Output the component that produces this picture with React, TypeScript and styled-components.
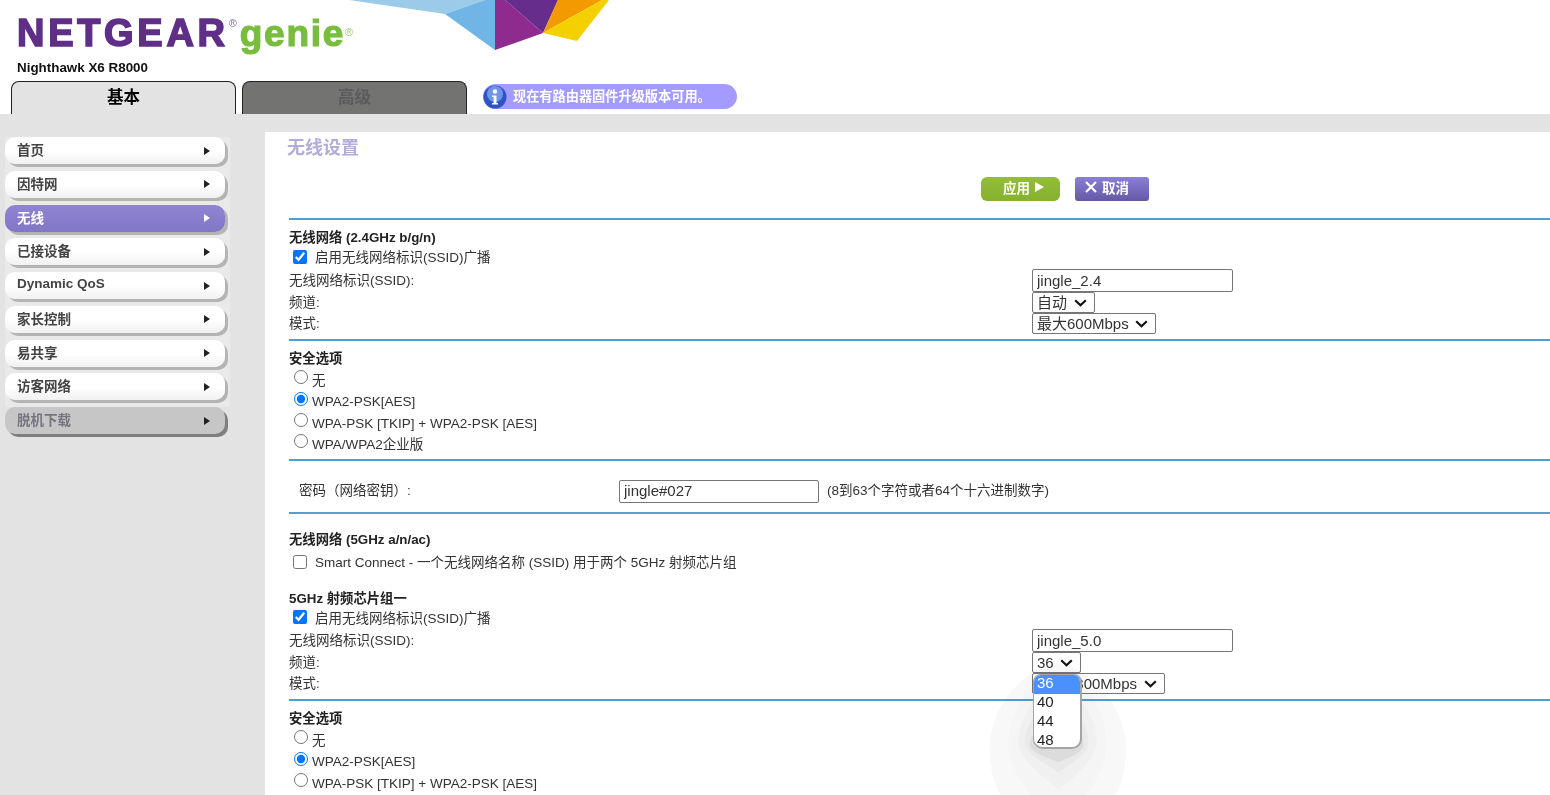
import React from 'react';
import styled, { createGlobalStyle } from 'styled-components';

const GlobalStyle = createGlobalStyle`
  html, body {
    margin: 0;
    padding: 0;
    height: 795px;
    overflow: hidden;
    background: #fff;
    font-family: "Liberation Sans", "Noto Sans CJK SC", Arial, sans-serif;
    font-size: 13.5px;
    line-height: 16px;
    color: #333;
  }
`;

const Page = styled.div`
  width: 1550px;
  height: 795px;
  overflow: hidden;
  display: flex;
  flex-direction: column;
`;

const Header = styled.header`
  height: 114px;
  flex: none;
  display: flex;
  flex-direction: column;
`;

const BrandRow = styled.div`
  height: 81px;
  display: flex;
  align-items: flex-start;
`;

const BrandText = styled.div`
  width: 349px;
  padding: 8px 0 0 17px;
  box-sizing: border-box;
`;

const Logo = styled.div`
  display: flex;
  align-items: baseline;
  height: 51px;
  line-height: 50px;
  font-weight: 700;
  white-space: nowrap;
`;

const LogoMain = styled.span`
  font-size: 38px;
  letter-spacing: 3.7px;
  color: #5f2f87;
  -webkit-text-stroke: 1.6px #5f2f87;
`;

const LogoSub = styled.span`
  font-size: 37px;
  letter-spacing: 1.7px;
  margin-left: 3px;
  color: #78bd3e;
  -webkit-text-stroke: 1.2px #78bd3e;
`;

const Reg = styled.span<{ $c: string; $top: number }>`
  align-self: flex-start;
  margin-top: ${(p) => p.$top}px;
  font-size: 11px;
  font-weight: 400;
  line-height: 10px;
  color: ${(p) => p.$c};
`;

const Model = styled.div`
  margin-top: 1px;
  font-size: 13.4px;
  font-weight: 700;
  color: #111;
`;

const TabRow = styled.div`
  height: 33px;
  display: flex;
  padding-left: 11px;
`;

const Tab = styled.div<{ $off?: boolean }>`
  width: 225px;
  height: 33px;
  margin-right: 6px;
  box-sizing: border-box;
  border: 1px solid #222;
  border-bottom: none;
  border-radius: 8px 8px 0 0;
  background: ${(p) => (p.$off ? '#737472' : '#e3e3e3')};
  color: ${(p) => (p.$off ? '#5b5b5b' : '#000')};
  font-size: 16.5px;
  font-weight: 700;
  text-align: center;
  line-height: 30px;
`;

const Notice = styled.div`
  width: 254px;
  height: 25px;
  margin: 3px 0 0 10px;
  box-sizing: border-box;
  border-radius: 13px;
  background: #a39bff;
  color: #fff;
  font-size: 13.2px;
  font-weight: 700;
  display: flex;
  align-items: center;
  gap: 6px;
  white-space: nowrap;
`;

const GrayBar = styled.div`
  height: 18px;
  flex: none;
  background: #e3e3e3;
`;

const Main = styled.div`
  flex: 1;
  display: flex;
  min-height: 0;
`;

const Sidebar = styled.nav`
  width: 265px;
  flex: none;
  background: #e3e3e3;
  padding: 5px 0 0 5px;
  box-sizing: border-box;
`;

const NavSlot = styled.div`
  width: 225px;
  height: 33.75px;
  background: #e9e9e9;
  &:last-child {
    background: none;
  }
`;

const NavItem = styled.div<{ $active?: boolean; $off?: boolean }>`
  width: 220px;
  height: 27px;
  padding: 0 15px 0 12px;
  box-sizing: border-box;
  display: flex;
  align-items: center;
  justify-content: space-between;
  border-radius: 10px;
  font-size: 13.5px;
  font-weight: 700;
  background: ${(p) =>
    p.$active
      ? 'linear-gradient(#8f84d2, #8276c6)'
      : p.$off
      ? '#c6c6c6'
      : 'linear-gradient(#fff 0%, #fff 50%, #f1f1f1 100%)'};
  color: ${(p) => (p.$active ? '#fff' : p.$off ? '#75757f' : '#444')};
  box-shadow: 3px 3px 0 ${(p) => (p.$off ? '#7f7f7f' : '#b4b4b4')};
`;

const NavLabel = styled.span<{ $latin?: boolean }>`
  margin-top: ${(p) => (p.$latin ? -3 : 1)}px;
`;

const Arrow = styled.span<{ $active?: boolean }>`
  width: 0;
  height: 0;
  border-style: solid;
  border-width: 4px 0 4px 6px;
  border-color: transparent transparent transparent ${(p) => (p.$active ? '#fff' : '#222')};
`;

const Content = styled.main`
  flex: 1;
  position: relative;
  padding-left: 24px;
  overflow: hidden;
`;

const Title = styled.h1`
  margin: 0 0 0 -2px;
  height: 32px;
  line-height: 33px;
  font-size: 18px;
  font-weight: 700;
  color: #b3acd9;
`;

const ButtonBar = styled.div`
  height: 54px;
  padding: 13px 0 0 692px;
  box-sizing: border-box;
  display: flex;
  gap: 15px;
`;

const ActionButton = styled.button<{ $w: number; $kind: 'apply' | 'cancel' }>`
  width: ${(p) => p.$w}px;
  height: 24px;
  padding: 0 ${(p) => (p.$kind === 'apply' ? 0 : 10)}px 4px ${(p) => (p.$kind === 'apply' ? 6 : 0)}px;
  border: none;
  border-radius: ${(p) => (p.$kind === 'apply' ? 6 : 3)}px;
  background: ${(p) =>
    p.$kind === 'apply' ? 'linear-gradient(#93bd3a, #85b22e)' : 'linear-gradient(#8a7fd6, #6458a6)'};
  color: #fff;
  font-family: inherit;
  font-size: 13.5px;
  font-weight: 700;
  display: flex;
  align-items: center;
  justify-content: center;
  gap: 5px;
`;

const Rule = styled.hr<{ $mt?: number }>`
  height: 2px;
  margin: ${(p) => p.$mt ?? 0}px 0 0;
  border: none;
  background: #4f9fd2;
`;

const Heading = styled.div<{ $mt?: number }>`
  height: 20px;
  line-height: 22px;
  margin-top: ${(p) => p.$mt ?? 0}px;
  font-size: 13.33px;
  font-weight: 700;
  color: #222;
`;

const CheckRow = styled.label<{ $mt?: number; $h?: number }>`
  height: ${(p) => p.$h ?? 22}px;
  margin-top: ${(p) => p.$mt ?? 0}px;
  padding-left: 4px;
  display: flex;
  align-items: center;
  gap: 8px;
`;

const Check = styled.input.attrs({ type: 'checkbox' })`
  width: 14px;
  height: 14px;
  margin: -3px 0 0;
`;

const RadioRow = styled.label<{ $h: number }>`
  height: ${(p) => p.$h}px;
  padding-left: 5px;
  display: flex;
  align-items: center;
  gap: 4px;
`;

const Radio = styled.input.attrs({ type: 'radio' })`
  width: 14px;
  height: 14px;
  margin: -7px 0 0;
`;

const RadioGroup = styled.div`
  margin-top: 2px;
  display: flex;
  flex-direction: column;
`;

const FieldRow = styled.div<{ $h: number }>`
  height: ${(p) => p.$h}px;
  display: grid;
  grid-template-columns: 743px auto;
  align-items: center;
  justify-content: start;
`;

const FieldControl = styled.div`
  display: flex;
`;

const TextInput = styled.input.attrs({ type: 'text' })<{ $w?: number }>`
  width: ${(p) => p.$w ?? 201}px;
  height: 23px;
  padding: 0 4px 1px;
  box-sizing: border-box;
  border: 1px solid #767676;
  border-radius: 2px;
  font-family: inherit;
  font-size: 15px;
  color: #333;
`;

const chevron =
  "data:image/svg+xml,%3Csvg xmlns='http://www.w3.org/2000/svg' width='13' height='8' viewBox='0 0 13 8'%3E%3Cpath d='M1.2 1.2l5.3 5 5.3-5' fill='none' stroke='%23111' stroke-width='2.2'/%3E%3C/svg%3E";

const Select = styled.select`
  appearance: none;
  height: 21px;
  padding: 0 26px 0 4px;
  box-sizing: border-box;
  border: 1px solid #767676;
  border-radius: 2px;
  background: #fff url("${chevron}") no-repeat right 7px center;
  font-family: inherit;
  font-size: 15px;
  color: #333;
`;

const PasswordRow = styled.div`
  height: 24px;
  margin-top: 18px;
  padding-left: 10px;
  display: grid;
  grid-template-columns: 320px auto 1fr;
  align-items: center;
`;

const Hint = styled.span`
  padding-left: 8px;
`;

const Glow = styled.svg`
  position: absolute;
  left: 715px;
  top: 523px;
  mix-blend-mode: multiply;
  pointer-events: none;
`;

const Popup = styled.ul`
  position: absolute;
  left: 768px;
  top: 542px;
  width: 49px;
  height: 75px;
  margin: 0;
  padding: 0;
  box-sizing: border-box;
  list-style: none;
  overflow: hidden;
  border: 1px solid #a5a5a5;
  border-right-width: 2px;
  border-bottom-width: 2px;
  border-radius: 8px 8px 10px 10px;
  background: #fff;
  font-size: 15px;
  color: #222;
`;

const PopupItem = styled.li<{ $selected?: boolean }>`
  height: 19px;
  line-height: 15px;
  padding-left: 3px;
  background: ${(p) => (p.$selected ? '#4a90ff' : 'transparent')};
  color: ${(p) => (p.$selected ? '#fff' : 'inherit')};
`;

const navItems = ['首页', '因特网', '无线', '已接设备', 'Dynamic QoS', '家长控制', '易共享', '访客网络', '脱机下载'];

const HeaderArt = () => (
  <svg width="270" height="52" viewBox="349 0 270 52">
    <polygon points="349,0 445,14 485,0" fill="#9bcbe8" />
    <polygon points="445,14 485,0 495,0 495,50" fill="#70b5e6" />
    <polygon points="495,0 505,0 543,33 495,50" fill="#8f2a8f" />
    <polygon points="505,0 558,0 543,33" fill="#662d8c" />
    <polygon points="558,0 602,0 543,33" fill="#f29a00" />
    <polygon points="602,0 609,0 577,41 543,33" fill="#f5d000" />
  </svg>
);

const InfoIcon = () => (
  <svg width="24" height="24" viewBox="0 0 24 24">
    <circle cx="12" cy="12" r="11.5" fill="#2f55c4" />
    <circle cx="12" cy="9" r="8" fill="#6f94ea" />
    <circle cx="12" cy="6.5" r="2.2" fill="#fff" />
    <path d="M9 10.5h4.5V18H15v1.6H9V18h1.6v-6H9z" fill="#fff" />
  </svg>
);

const Play = () => (
  <svg width="9" height="10" viewBox="0 0 9 10">
    <path d="M0 0l9 5-9 5z" fill="#fff" />
  </svg>
);

const Cross = () => (
  <svg width="12" height="12" viewBox="0 0 12 12">
    <path d="M1 1l10 10M11 1L1 11" stroke="#fff" strokeWidth="2.2" />
  </svg>
);

// soft banded shadow that sits under the open channel list
const DropShadow = () => (
  <Glow width="155" height="140" viewBox="0 0 465 420">
    <path d="M232 25C120 40 28 170 28 280C28 350 50 400 60 420L405 420C425 390 438 340 438 280C438 170 345 40 232 25Z" fill="#f8f8f8" />
    <path d="M232 50C150 60 85 170 85 270C85 330 130 390 150 420L320 420C345 385 380 330 380 270C380 170 315 60 232 50Z" fill="#f5f5f5" />
    <path d="M232 100C170 100 115 190 115 260C115 310 190 370 235 402C280 370 350 310 350 260C350 190 295 100 232 100Z" fill="#f0f0f0" />
    <path d="M232 150C180 150 135 210 135 260C135 300 205 330 235 352C265 330 325 300 325 260C325 210 285 150 232 150Z" fill="#e9e9e9" />
    <path d="M232 200C180 200 150 240 150 270C150 295 210 310 235 322C260 310 310 295 310 270C310 240 285 200 232 200Z" fill="#dcdcdc" />
  </Glow>
);

const App: React.FC = () => {
  return (
    <Page>
      <GlobalStyle />
      <Header>
        <BrandRow>
          <BrandText>
            <Logo>
              <LogoMain>NETGEAR</LogoMain>
              <Reg $c="#8a6aa8" $top={10}>®</Reg>
              <LogoSub>genie</LogoSub>
              <Reg $c="#9ccf74" $top={19}>®</Reg>
            </Logo>
            <Model>Nighthawk X6 R8000</Model>
          </BrandText>
          <HeaderArt />
        </BrandRow>
        <TabRow>
          <Tab>基本</Tab>
          <Tab $off>高级</Tab>
          <Notice>
            <InfoIcon />
            现在有路由器固件升级版本可用。
          </Notice>
        </TabRow>
      </Header>
      <GrayBar />
      <Main>
        <Sidebar>
          {navItems.map((item) => (
            <NavSlot key={item}>
              <NavItem $active={item === '无线'} $off={item === '脱机下载'}>
                <NavLabel $latin={item === 'Dynamic QoS'}>{item}</NavLabel>
                <Arrow $active={item === '无线'} />
              </NavItem>
            </NavSlot>
          ))}
        </Sidebar>
        <Content>
          <Title>无线设置</Title>
          <ButtonBar>
            <ActionButton $kind="apply" $w={79}>
              应用 <Play />
            </ActionButton>
            <ActionButton $kind="cancel" $w={74}>
              <Cross /> 取消
            </ActionButton>
          </ButtonBar>
          <Rule />

          <Heading $mt={7}>无线网络 (2.4GHz b/g/n)</Heading>
          <CheckRow>
            <Check defaultChecked />
            启用无线网络标识(SSID)广播
          </CheckRow>
          <FieldRow $h={23}>
            <span>无线网络标识(SSID):</span>
            <FieldControl>
              <TextInput defaultValue="jingle_2.4" />
            </FieldControl>
          </FieldRow>
          <FieldRow $h={21}>
            <span>频道:</span>
            <FieldControl>
              <Select defaultValue="自动">
                <option>自动</option>
              </Select>
            </FieldControl>
          </FieldRow>
          <FieldRow $h={21}>
            <span>模式:</span>
            <FieldControl>
              <Select defaultValue="最大600Mbps">
                <option>最大600Mbps</option>
              </Select>
            </FieldControl>
          </FieldRow>
          <Rule $mt={5} />

          <Heading $mt={7}>安全选项</Heading>
          <RadioGroup>
            <RadioRow $h={21}>
              <Radio name="sec24" />无
            </RadioRow>
            <RadioRow $h={22}>
              <Radio name="sec24" defaultChecked />
              WPA2-PSK[AES]
            </RadioRow>
            <RadioRow $h={21}>
              <Radio name="sec24" />
              WPA-PSK [TKIP] + WPA2-PSK [AES]
            </RadioRow>
            <RadioRow $h={21}>
              <Radio name="sec24" />
              WPA/WPA2企业版
            </RadioRow>
          </RadioGroup>
          <Rule $mt={4} />

          <PasswordRow>
            <span>密码（网络密钥）:</span>
            <TextInput $w={200} defaultValue="jingle#027" />
            <Hint>(8到63个字符或者64个十六进制数字)</Hint>
          </PasswordRow>
          <Rule $mt={9} />

          <Heading $mt={15}>无线网络 (5GHz a/n/ac)</Heading>
          <CheckRow $mt={3}>
            <Check />
            Smart Connect - 一个无线网络名称 (SSID) 用于两个 5GHz 射频芯片组
          </CheckRow>

          <Heading $mt={14}>5GHz 射频芯片组一</Heading>
          <CheckRow $h={21}>
            <Check defaultChecked />
            启用无线网络标识(SSID)广播
          </CheckRow>
          <FieldRow $h={23}>
            <span>无线网络标识(SSID):</span>
            <FieldControl>
              <TextInput defaultValue="jingle_5.0" />
            </FieldControl>
          </FieldRow>
          <FieldRow $h={21}>
            <span>频道:</span>
            <FieldControl>
              <Select defaultValue="36">
                <option>36</option>
                <option>40</option>
                <option>44</option>
                <option>48</option>
              </Select>
            </FieldControl>
          </FieldRow>
          <FieldRow $h={21}>
            <span>模式:</span>
            <FieldControl>
              <Select defaultValue="最大1300Mbps">
                <option>最大1300Mbps</option>
              </Select>
            </FieldControl>
          </FieldRow>
          <Rule $mt={5} />

          <Heading $mt={7}>安全选项</Heading>
          <RadioGroup>
            <RadioRow $h={21}>
              <Radio name="sec5" />无
            </RadioRow>
            <RadioRow $h={22}>
              <Radio name="sec5" defaultChecked />
              WPA2-PSK[AES]
            </RadioRow>
            <RadioRow $h={21}>
              <Radio name="sec5" />
              WPA-PSK [TKIP] + WPA2-PSK [AES]
            </RadioRow>
          </RadioGroup>

          <DropShadow />
          <Popup>
            <PopupItem $selected>36</PopupItem>
            <PopupItem>40</PopupItem>
            <PopupItem>44</PopupItem>
            <PopupItem>48</PopupItem>
          </Popup>
        </Content>
      </Main>
    </Page>
  );
};

export default App;
